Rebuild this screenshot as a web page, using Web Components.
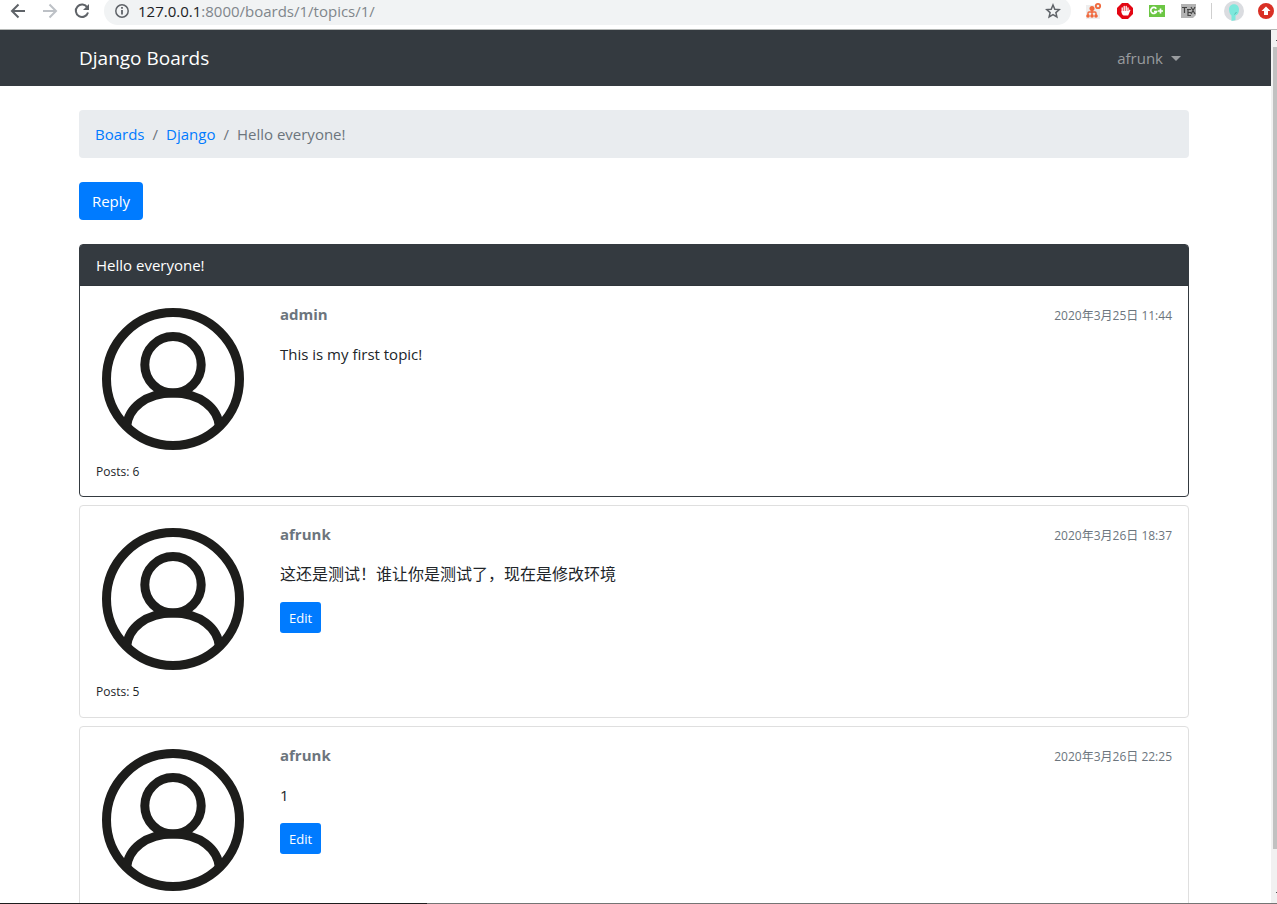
<!DOCTYPE html>
<html lang="en">
<head>
<meta charset="utf-8">
<meta name="viewport" content="width=device-width, initial-scale=1">
<title>Hello everyone! - Django Boards</title>
<style>
  html, body { margin: 0; height: 100%; overflow: hidden; }
  body {
    background: #fff; color: #212529;
    font: 15px/24px "Open Sans", "Noto Sans CJK SC", sans-serif;
    --cjk: "Noto Sans CJK SC", sans-serif;
  }
</style>
</head>
<body>
<app-window>
  <browser-bar slot="bar"></browser-bar>
  <site-nav brand="Django Boards" user="afrunk"></site-nav>
  <site-container>
    <bread-crumb>
      <a href="#boards">Boards</a>
      <a href="#django">Django</a>
      <span aria-current="page">Hello everyone!</span>
    </bread-crumb>
    <app-button>Reply</app-button>
    <post-list>
      <post-card heading="Hello everyone!" author="admin" date="2020年3月25日 11:44" posts="6">This is my first topic!</post-card>
      <post-card author="afrunk" date="2020年3月26日 18:37" posts="5" editable><span lang="zh" style="font-size:16px">这还是测试！谁让你是测试了，现在是修改环境</span></post-card>
      <post-card author="afrunk" date="2020年3月26日 22:25" editable>1</post-card>
    </post-list>
  </site-container>
</app-window>

<script>
const define = (name, render) => customElements.define(name, class extends HTMLElement {
  constructor() { super(); this.attachShadow({ mode: "open" }); }
  connectedCallback() { this.shadowRoot.innerHTML = render(this); }
});

define("app-window", () => `
<style>
  :host { display: grid; grid-template-rows: auto minmax(0, 1fr) 1px; height: 100vh; }
  .view { display: grid; grid-template-columns: minmax(0, 1fr) 6px; min-height: 0; }
  .page { overflow: hidden; min-height: 0; }
  .track { background: #f1f1f1; display: flex; flex-direction: column; align-items: flex-end; padding: 10px 0; box-sizing: border-box; overflow: hidden; }
  .arrow { flex: none; width: 1px; height: 1px; background: #505050; }
  .thumb { flex: none; width: 4px; height: 94%; margin-top: 6px; background: #c1c1c1; }
  .down { margin-top: auto; }
  .edge { background: linear-gradient(90deg, #1e1e1e 0 33.4%, #747474 33.4%); }
</style>
<slot name="bar"></slot>
<div class="view">
  <div class="page"><slot></slot></div>
  <div class="track"><i class="arrow"></i><i class="thumb"></i><i class="arrow down"></i></div>
</div>
<div class="edge"></div>`);

define("browser-bar", () => `
<style>
  :host { display: flex; align-items: flex-start; height: 29px; border-bottom: 1px solid #b5b8b6; background: #fff; overflow: hidden; }
  button { display: block; flex: none; border: 0; padding: 0; background: none; width: 32px; height: 22px; }
  svg { display: block; margin: 0 auto; }
  .nav { display: flex; padding-left: 2px; }
  .box { flex: 1; display: flex; height: 28px; margin: -3px 6px 0 6px; padding: 3px 2px 0 10px; box-sizing: border-box; border-radius: 14px; background: #f1f3f4; }
  .info { width: 16px; margin-right: 8px; }
  .url { flex: 1; min-width: 0; height: 22px; line-height: 22px; font-size: 15px; color: #80868b; white-space: nowrap; }
  b { font-weight: 400; color: #202124; }
  .ext { display: flex; align-items: flex-start; }
  .sep { width: 1px; height: 16px; margin: 3px 6px 0 6px; background: #cfcfcf; }
  .last { width: 32px; }
  .ext .last { margin-right: -5px; }
</style>
<div class="nav">
  <button aria-label="Back"><svg width="16" height="22" fill="none" stroke="#5f6368" stroke-width="2"><path d="M15 11H2M8.500 4.500 2 11l6.500 6.500"/></svg></button>
  <button aria-label="Forward"><svg width="16" height="22" fill="none" stroke="#bdc1c6" stroke-width="2"><path d="M1 11h13M7.500 4.500 14 11l-6.500 6.500"/></svg></button>
  <button aria-label="Reload"><svg width="16" height="22" fill="none" stroke="#5f6368" stroke-width="2"><path d="M13.300 7.500A6.200 6.200 0 1 0 14 12.500"/><path d="M15 4v6H9z" fill="#5f6368" stroke="none"/></svg></button>
</div>
<div class="box">
  <button class="info" aria-label="Site information"><svg width="16" height="22" fill="none" stroke="#5f6368" stroke-width="1.500"><circle cx="8" cy="11" r="6.200"/><path d="M8 10v4.500M8 7v1.800" stroke-width="1.800"/></svg></button>
  <div class="url"><b>127.0.0.1</b>:8000/boards/1/topics/1/</div>
  <button aria-label="Bookmark"><svg width="16" height="22" fill="none" stroke="#5f6368" stroke-width="1.500"><path d="m8 5 1.800 4.200 4.500.4-3.400 3 1 4.400L8 14.700 4.100 17l1-4.400-3.400-3 4.500-.4z"/></svg></button>
</div>
<div class="ext">
  <button aria-label="Site map extension"><svg width="18" height="22"><path d="M2 5h14v14H2z" fill="#eee"/><g fill="none" stroke="#f0683c" stroke-width="1.400"><path d="M8 8v7M4 16v-3q0-1 1-1h6q1 0 1 1v3"/><circle cx="14" cy="6" r="2.200" stroke-width="1.800"/></g><g fill="#f0683c"><circle cx="8" cy="8.500" r="2.500"/><circle cx="4" cy="16" r="1.800"/><circle cx="8" cy="16" r="1.800"/><circle cx="12" cy="16" r="1.800"/></g></svg></button>
  <button aria-label="Ad blocker"><svg width="16" height="22"><path d="M5 3h6l5 5v6l-5 5H5l-5-5V8z" fill="#e30613"/><path d="M5.200 12V8M7.200 12V6.500M9.200 12V6.500M11 12V8" stroke="#fff" stroke-width="1.300" stroke-linecap="round"/><path d="M4.600 11h7l1-1.500.9.500-2.300 5.500H6.500q-1.900-1-1.900-3z" fill="#fff"/></svg></button>
  <button aria-label="G+"><svg width="16" height="22"><path d="M0 5h16v12H0z" fill="#6cc644"/><g fill="none" stroke="#fff" stroke-width="1.700"><path d="M7.300 8.800A3 3 0 1 0 7.600 11.500H5M9 11h5M11.500 8.500v5"/></g></svg></button>
  <button aria-label="TeX"><svg width="16" height="22"><path d="M0 4h15v11l-3 3H0z" fill="#b3b3b3"/><path d="M1 7.500h5M3.500 7v6M6 9.500h4M7 9.500v6h3M7 12.500h3M10 7l4 7M14 7l-4 7" fill="none" stroke="#444" stroke-width="1.200"/></svg></button>
  <i class="sep"></i>
  <button aria-label="Profile"><svg width="20" height="22"><circle cx="10" cy="11" r="10" fill="#dadce0"/><path d="M5 9.500c0-7 10-7 10 0 0 3.500-1.500 5.500-3.500 6V20l-4 1v-5.500C6 14.500 5 12 5 9.500z" fill="#7de8dc"/><path d="m12.500 12-2 2.500" fill="none" stroke="#58bdb3"/></svg></button>
  <button class="last" aria-label="Update available"><svg width="16" height="22"><circle cx="8" cy="11" r="8" fill="#d93025"/><path d="m8 6.500 4.500 4.500H10v4H6v-4H3.500z" fill="#fff"/></svg></button>
</div>`);

define("site-nav", el => `
<style>
  :host { display: block; background: #343a40; padding-right: 3px; }
  nav { display: flex; align-items: center; justify-content: space-between; max-width: 1110px; height: 56px; margin: 0 auto; }
  a { color: #fff; font-size: 19px; line-height: 30px; text-decoration: none; }
  button { display: flex; align-items: center; gap: 8px; padding: 8px; border: 0; background: none; font: inherit; color: #999c9f; }
  i { border: 5px solid transparent; border-top-color: currentColor; border-bottom: 0; }
</style>
<nav>
  <a href="#home">${el.getAttribute("brand")}</a>
  <button aria-haspopup="true">${el.getAttribute("user")}<i></i></button>
</nav>`);

define("site-container", () => `
<style>
  :host { display: block; padding-right: 3px; }
  main { display: flex; flex-direction: column; align-items: stretch; gap: 24px; max-width: 1110px; margin: 24px auto; }
</style>
<main><slot></slot></main>`);

define("bread-crumb", () => `
<style>
  :host { display: block; background: #e9ecef; border-radius: 4px; color: #6c757d; }
  nav { display: flex; padding: 12px 16px; }
  ::slotted(a) { color: #007bff; text-decoration: none; }
  ::slotted(a)::after { content: "/"; color: #6c757d; padding: 0 8px; display: inline-block; }
</style>
<nav aria-label="breadcrumb"><slot></slot></nav>`);

define("app-button", () => `
<style>
  :host { display: flex; }
  button { min-width: 64px; height: 38px; padding: 0 12px; border: 0; border-radius: 4px; background: #007bff; color: #fff; font: inherit; }
  :host([small]) button { min-width: 41px; height: 31px; padding: 0 8px; border-radius: 3px; font-size: 13px; }
</style>
<button><slot></slot></button>`);

define("post-list", () => `
<style>
  :host { display: flex; flex-direction: column; gap: 8px; }
</style>
<slot></slot>`);

define("user-avatar", () => `
<style>
  :host { display: block; }
  svg { display: block; width: 154px; height: 154px; }
</style>
<svg viewBox="0 0 154 154" role="img" aria-label="User avatar" fill="none" stroke="#1d1d1b" stroke-width="9">
  <circle cx="77" cy="77" r="66.500"/>
  <circle cx="77" cy="62.800" r="28.200"/>
  <path d="M30.500 125C32 106 50 91 77 91S122 106 123.500 125"/>
</svg>`);

define("post-card", el => {
  const at = n => el.getAttribute(n);
  return `
<style>
  :host { display: block; border: 1px solid #dfdfdf; border-radius: 4px; }
  :host([heading]) { border-color: #343a40; }
  header { padding: 8px 16px; border-bottom: 1px solid #2f353a; background: #343a40; color: #fff; border-radius: 2px 2px 0 0; }
  .body { display: grid; grid-template-columns: 154px minmax(0, 1fr); gap: 30px; padding: 16px 16px 12px; }
  .posts { display: block; padding-top: 4px; font-size: 12px; line-height: 24px; }
  :host(:not([heading])) .posts { padding-bottom: 1px; }
  .top { display: flex; justify-content: space-between; color: #6c757d; }
  strong { font-weight: 700; }
  time { padding-top: 2px; font-size: 12px; line-height: 24px; font-family: "Open Sans", var(--cjk); }
  .top strong { height: 24px; }
  .top { height: 24px; }
  p { margin: 16px 0; }
</style>
<article>
  ${at("heading") ? `<header>${at("heading")}</header>` : ""}
  <div class="body">
    <div><user-avatar></user-avatar>${at("posts") ? `<small class="posts">Posts: ${at("posts")}</small>` : ""}</div>
    <div>
      <div class="top"><strong>${at("author")}</strong><time>${at("date")}</time></div>
      <p><slot></slot></p>
      ${el.hasAttribute("editable") ? `<app-button small>Edit</app-button>` : ""}
    </div>
  </div>
</article>`;
});
</script>
</body>
</html>
